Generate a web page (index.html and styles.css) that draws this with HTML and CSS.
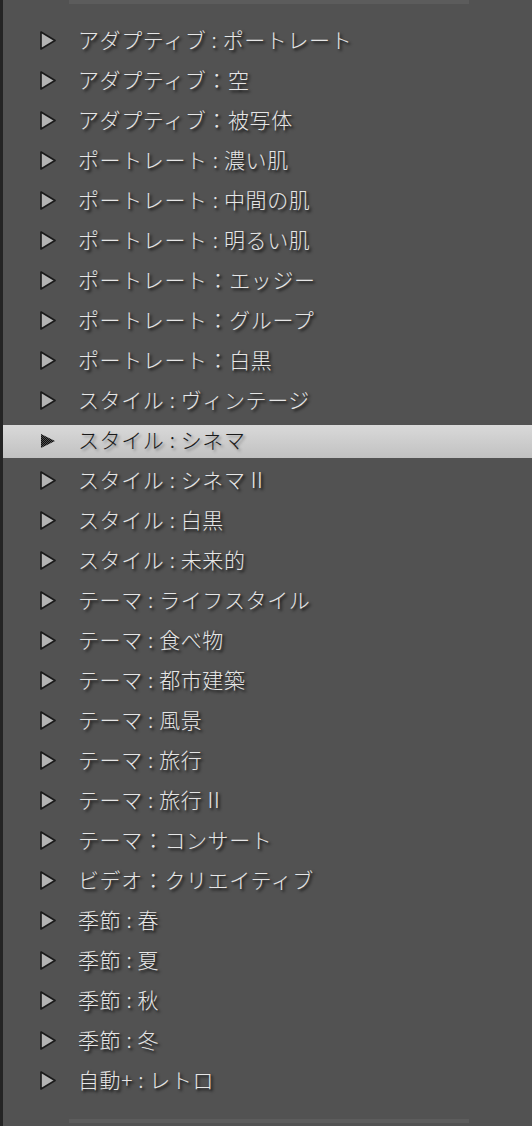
FILE: index.html
```html
<!DOCTYPE html>
<html lang="ja">
<head>
<meta charset="utf-8">
<link rel="stylesheet" href="styles.css">
</head>
<body>
<div class="panel">
  <div class="bar"></div>
  <ul class="list">
    <li class="row"><svg class="tri" viewBox="0 0 16 19"><path d="M1 1 L15 9.5 L1 18 Z"/></svg><span class="label">アダプティブ : ポートレート</span></li>
    <li class="row"><svg class="tri" viewBox="0 0 16 19"><path d="M1 1 L15 9.5 L1 18 Z"/></svg><span class="label">アダプティブ：空</span></li>
    <li class="row"><svg class="tri" viewBox="0 0 16 19"><path d="M1 1 L15 9.5 L1 18 Z"/></svg><span class="label">アダプティブ：被写体</span></li>
    <li class="row"><svg class="tri" viewBox="0 0 16 19"><path d="M1 1 L15 9.5 L1 18 Z"/></svg><span class="label">ポートレート : 濃い肌</span></li>
    <li class="row"><svg class="tri" viewBox="0 0 16 19"><path d="M1 1 L15 9.5 L1 18 Z"/></svg><span class="label">ポートレート : 中間の肌</span></li>
    <li class="row"><svg class="tri" viewBox="0 0 16 19"><path d="M1 1 L15 9.5 L1 18 Z"/></svg><span class="label">ポートレート : 明るい肌</span></li>
    <li class="row"><svg class="tri" viewBox="0 0 16 19"><path d="M1 1 L15 9.5 L1 18 Z"/></svg><span class="label">ポートレート：エッジー</span></li>
    <li class="row"><svg class="tri" viewBox="0 0 16 19"><path d="M1 1 L15 9.5 L1 18 Z"/></svg><span class="label">ポートレート：グループ</span></li>
    <li class="row"><svg class="tri" viewBox="0 0 16 19"><path d="M1 1 L15 9.5 L1 18 Z"/></svg><span class="label">ポートレート：白黒</span></li>
    <li class="row"><svg class="tri" viewBox="0 0 16 19"><path d="M1 1 L15 9.5 L1 18 Z"/></svg><span class="label">スタイル : ヴィンテージ</span></li>
    <li class="row selected"><svg class="tri tri-sel" viewBox="0 0 16 19"><defs><pattern id="dots" width="2" height="2" patternUnits="userSpaceOnUse"><rect width="2" height="2" fill="#505050"/><rect width="1" height="1" fill="#0e0e0e"/><rect x="1" y="1" width="1" height="1" fill="#0e0e0e"/></pattern></defs><path class="sel-shape" d="M1 3 L15 10 L1 17 Z"/></svg><span class="label">スタイル : シネマ</span></li>
    <li class="row"><svg class="tri" viewBox="0 0 16 19"><path d="M1 1 L15 9.5 L1 18 Z"/></svg><span class="label">スタイル : シネマ II</span></li>
    <li class="row"><svg class="tri" viewBox="0 0 16 19"><path d="M1 1 L15 9.5 L1 18 Z"/></svg><span class="label">スタイル : 白黒</span></li>
    <li class="row"><svg class="tri" viewBox="0 0 16 19"><path d="M1 1 L15 9.5 L1 18 Z"/></svg><span class="label">スタイル : 未来的</span></li>
    <li class="row"><svg class="tri" viewBox="0 0 16 19"><path d="M1 1 L15 9.5 L1 18 Z"/></svg><span class="label">テーマ : ライフスタイル</span></li>
    <li class="row"><svg class="tri" viewBox="0 0 16 19"><path d="M1 1 L15 9.5 L1 18 Z"/></svg><span class="label">テーマ : 食べ物</span></li>
    <li class="row"><svg class="tri" viewBox="0 0 16 19"><path d="M1 1 L15 9.5 L1 18 Z"/></svg><span class="label">テーマ : 都市建築</span></li>
    <li class="row"><svg class="tri" viewBox="0 0 16 19"><path d="M1 1 L15 9.5 L1 18 Z"/></svg><span class="label">テーマ : 風景</span></li>
    <li class="row"><svg class="tri" viewBox="0 0 16 19"><path d="M1 1 L15 9.5 L1 18 Z"/></svg><span class="label">テーマ : 旅行</span></li>
    <li class="row"><svg class="tri" viewBox="0 0 16 19"><path d="M1 1 L15 9.5 L1 18 Z"/></svg><span class="label">テーマ : 旅行 II</span></li>
    <li class="row"><svg class="tri" viewBox="0 0 16 19"><path d="M1 1 L15 9.5 L1 18 Z"/></svg><span class="label">テーマ：コンサート</span></li>
    <li class="row"><svg class="tri" viewBox="0 0 16 19"><path d="M1 1 L15 9.5 L1 18 Z"/></svg><span class="label">ビデオ：クリエイティブ</span></li>
    <li class="row"><svg class="tri" viewBox="0 0 16 19"><path d="M1 1 L15 9.5 L1 18 Z"/></svg><span class="label">季節 : 春</span></li>
    <li class="row"><svg class="tri" viewBox="0 0 16 19"><path d="M1 1 L15 9.5 L1 18 Z"/></svg><span class="label">季節 : 夏</span></li>
    <li class="row"><svg class="tri" viewBox="0 0 16 19"><path d="M1 1 L15 9.5 L1 18 Z"/></svg><span class="label">季節 : 秋</span></li>
    <li class="row"><svg class="tri" viewBox="0 0 16 19"><path d="M1 1 L15 9.5 L1 18 Z"/></svg><span class="label">季節 : 冬</span></li>
    <li class="row"><svg class="tri" viewBox="0 0 16 19"><path d="M1 1 L15 9.5 L1 18 Z"/></svg><span class="label">自動+ : レトロ</span></li>
  </ul>
  <div class="bar bar-bottom"></div>
</div>
</body>
</html>
```
FILE: styles.css
```css
html, body {
  margin: 0;
  padding: 0;
  background: #525252;
}

body {
  width: 532px;
  height: 1126px;
  overflow: hidden;
  font-family: "Noto Sans CJK JP", "Liberation Sans", sans-serif;
}

.panel {
  height: 1126px;
  border-left: 3px solid #242424;
  box-sizing: border-box;
  display: flex;
  flex-direction: column;
}

.bar {
  margin-left: 66px;
  width: 400px;
  height: 4px;
  background: #5c5c5c;
  flex: none;
}

.bar-bottom {
  margin-top: 20px;
}

.list {
  list-style: none;
  margin: 0;
  padding: 15px 0 0 0;
}

.row {
  height: 40px;
  display: flex;
  align-items: center;
  padding-left: 37px;
}

.tri {
  width: 16px;
  height: 19px;
  flex: none;
  margin-top: 3px;
  margin-right: 22px;
}

.tri path {
  fill: #b4b4b4;
  stroke: #1a1a1a;
  stroke-width: 1.6;
  stroke-linejoin: round;
}

.tri path.sel-shape {
  fill: url(#dots);
  stroke: none;
}

.label {
  font-size: 21px;
  font-weight: 300;
  letter-spacing: 0.6px;
  line-height: 40px;
  color: #e6e6e6;
  text-shadow: 2px 2px 3px rgba(0, 0, 0, 0.9);
  white-space: nowrap;
}

.selected {
  background: linear-gradient(to bottom, transparent 6px, #d9d9d9 6px, #c1c1c1 39px, transparent 39px);
}

.selected .label {
  color: #1a1a1a;
  text-shadow: 2px 2px 3px rgba(0, 0, 0, 0.35);
}
```
